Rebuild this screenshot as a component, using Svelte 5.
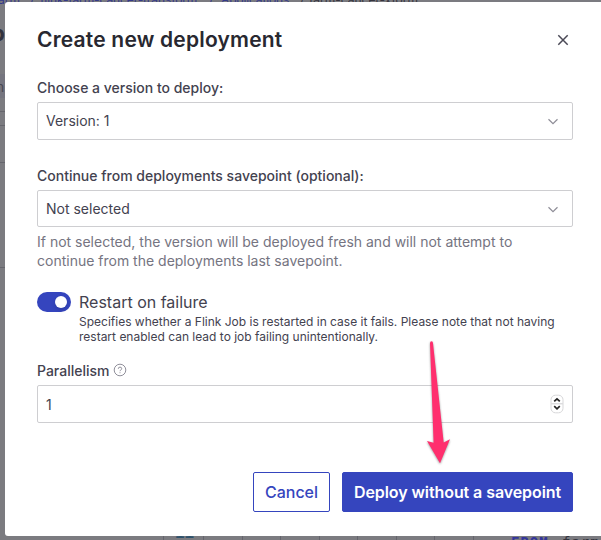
<script>
  let version = $state('Version: 1');
  let savepoint = $state('Not selected');
  let parallelism = $state(1);
  let restart = $state(true);
</script>

<div class="page">
  <div class="behind" aria-hidden="true">
    <span class="link" style="left:-2px">arm</span>
    <span class="link" style="left:30px">/</span>
    <span class="link w1" style="left:40px">flink-farm-cancer-transform</span>
    <span class="link" style="left:209px">/</span>
    <span class="link w2" style="left:221px">Applications</span>
    <span class="link dark" style="left:300px">/</span>
    <span class="link dark" style="left:309px">farm-cancer-xform</span>
    <span class="heading">p</span>
    <span class="panel"></span>
    <span class="col">n</span>
    <span class="rule" style="top:111px"></span>
    <span class="rule" style="top:125px"></span>
    <span class="rule" style="top:162px"></span>
    <span class="rule" style="top:267px"></span>
    <span class="line-no">11</span>
    {#each [163, 203, 242, 280, 319, 357, 396, 434, 473] as x}
      <span class="tick" style="left:{x}px"></span>
    {/each}
    <span class="code kw">FROM</span>
    <span class="code val">farm</span>
  </div>

  <main class="modal">
    <header>
      <h1>Create new deployment</h1>
      <button class="close" aria-label="Close">
        <svg width="12" height="12" viewBox="0 0 12 12"><path d="M1.3 1.3 10.7 10.7M10.7 1.3 1.3 10.7" /></svg>
      </button>
    </header>

    <div class="label l1"><span>Choose a version to deploy:</span></div>
    <div class="field">
      <span>{version}</span>
      <svg class="chev" width="12" height="8" viewBox="0 0 12 8"><path d="M1.5 2.3 6 6.7 10.5 2.3" /></svg>
    </div>

    <div class="label l2"><span>Continue from deployments savepoint (optional):</span></div>
    <div class="field short">
      <span>{savepoint}</span>
      <svg class="chev" width="12" height="8" viewBox="0 0 12 8"><path d="M1.5 2.3 6 6.7 10.5 2.3" /></svg>
    </div>
    <p class="hint">
      If not selected, the version will be deployed fresh and will not attempt to<br />
      continue from the deployments last savepoint.
    </p>

    <div class="toggle-row">
      <button class="switch" class:on={restart} aria-label="Restart on failure"><i></i></button>
      <div class="toggle-text">
        <div class="toggle-title">Restart on failure</div>
        <p>Specifies whether a Flink Job is restarted in case it fails. Please note that not having<br />restart enabled can lead to job failing unintentionally.</p>
      </div>
    </div>

    <div class="label l3">
      <span>Parallelism</span>
      <svg width="14" height="14" viewBox="0 0 14 14">
        <circle cx="7" cy="7" r="5.8" />
        <path d="M5.3 5.8Q5.3 4.1 7 4.1T8.7 5.7Q8.7 6.5 7.8 7 7 7.4 7 8.2M7 9.3V10.2" />
      </svg>
    </div>
    <div class="field number">
      <span>{parallelism}</span>
      <svg class="spin" width="14" height="20" viewBox="0 0 14 20">
        <rect x="1" y="1.2" width="12" height="17.6" rx="4.5" />
        <path class="mid" d="M1 9.7H13" />
        <path class="arrows" d="M4.2 7.4 7 4.8 9.8 7.4M4.2 12.2 7 14.8 9.8 12.2" />
      </svg>
    </div>

    <footer>
      <button class="btn cancel"><span>Cancel</span></button>
      <button class="btn primary"><span>Deploy without a savepoint</span></button>
    </footer>
  </main>

  <svg class="arrow" width="40" height="136" viewBox="0 0 40 136">
    <path d="M10 3.3Q10 1.2 11.5 1.2T13 3.3L23.7 102.5 30 99.3 20 123.3 7 101 13.6 102.8Z" />
  </svg>
</div>

<style>
  .page {
    position: relative;
    box-sizing: border-box;
    width: 601px;
    height: 540px;
    padding: 2px 0 4px 5px;
    overflow: hidden;
    background: #7b7b80;
    font-family: Inter, 'Liberation Sans', sans-serif;
    color: #43424f;
  }
  .behind span { position: absolute; white-space: nowrap; }
  .behind .link {
    top: -8px;
    font: 12px/16px Inter, sans-serif;
    color: #34398a;
  }
  .link.w1 { letter-spacing: -.1px; }
  .link.w2 { letter-spacing: -.15px; }
  .behind .link.dark { color: #35343e; }
  .behind .heading { left: -9px; top: 18px; font: 700 22px/30px Inter, sans-serif; color: #32323d; }
  .behind .panel { left: 0; top: 74px; width: 5px; height: 24px; background: #75757f; }
  .behind .col { left: -4px; top: 78px; font: 14px/18px Inter, sans-serif; color: #484853; }
  .rule { left: 0; width: 5px; height: 1px; background: #66666d; }
  .tick { top: 536px; width: 1px; height: 4px; background: #65656d; }
  .behind .line-no { left: 175px; top: 526px; font: bold 16px/16px 'Liberation Mono', monospace; color: #2f526c; }
  .behind .code { top: 534px; font: bold 14px/16px 'DejaVu Sans Mono', monospace; }
  .kw { left: 511px; color: #34359b; letter-spacing: 1px; }
  .behind .val { left: 562px; color: #34343e; font-weight: 400; letter-spacing: 1px; }

  .modal {
    position: relative;
    box-sizing: border-box;
    height: 534px;
    padding: 0 28px 0 32px;
    background: #fff;
    border-radius: 3px 0 0 3px;
  }
  header { display: flex; align-items: center; justify-content: space-between; height: 73px; }
  h1 {
    margin: 2px 0 0;
    font-size: 21px;
    line-height: 30px;
    font-weight: 600;
    letter-spacing: .2px;
    color: #282830;
    white-space: nowrap;
  }
  button { padding: 0; border: 0; background: none; font-family: inherit; }
  .close { display: flex; margin-right: 4px; margin-top: 3px; }
  .close path { fill: none; stroke: #4a4956; stroke-width: 1.5; }
  .label { display: flex; align-items: center; font-size: 14px; font-weight: 500; white-space: nowrap; }
  .label.l1 { height: 25px; margin-bottom: 2px; }
  .label.l2 { margin-top: 22px; height: 26px; margin-bottom: 2px; }
  .label.l3 { margin-top: 9px; height: 28px; margin-bottom: 1px; }
  .label svg { margin-left: 4px; }
  .label svg circle, .label svg path { fill: none; stroke: #908f9a; stroke-width: 1; }
  .field {
    display: flex;
    align-items: center;
    justify-content: space-between;
    box-sizing: border-box;
    height: 38px;
    padding: 0 13px 1px 8px;
    border: 1px solid #ceced1;
    border-radius: 2px;
    font-size: 14px;
  }
  .field.short { height: 37px; padding-bottom: 0; }
  .field.number { padding-right: 8px; padding-bottom: 0; }
  .chev path { fill: none; stroke: #8e8d97; stroke-width: 1.2; }
  .spin rect { fill: #fff; stroke: #d7d7d9; }
  .spin .mid { stroke: #dcdcde; fill: none; stroke-width: 1.5; }
  .spin .arrows { fill: none; stroke: #222; stroke-width: 1.7; }
  .hint { margin: 5px 0 0; height: 39px; font-size: 14px; line-height: 19px; color: #757481; white-space: nowrap; }
  .toggle-row { display: flex; gap: 8px; margin-top: 20px; height: 56px; }
  .switch { display: flex; align-items: center; box-sizing: border-box; width: 34px; height: 20px; margin-top: 1px; padding: 0 4px; border-radius: 10px; background: #aaa; }
  .switch.on { justify-content: flex-end; background: #3545be; }
  .switch i { width: 12px; height: 12px; border-radius: 50%; background: #fff; box-shadow: 0 2px 4px #0002; }
  .toggle-title { height: 23px; font-size: 16px; line-height: 22px; white-space: nowrap; }
  .toggle-text p { margin: 0; font-size: 12px; line-height: 15px; white-space: nowrap; }
  footer { display: flex; justify-content: flex-end; gap: 12px; margin-top: 49px; }
  .btn { box-sizing: border-box; height: 40px; border: 1px solid #3545be; border-radius: 2px; font-size: 16px; font-weight: 500; line-height: 24px; white-space: nowrap; }
  .cancel { width: 77px; color: #3545be; background: #fff; }
  .primary { width: 231px; color: #fff; background: #3545be; font-weight: 600; letter-spacing: -.08px; }
  .arrow { position: absolute; left: 420px; top: 340px; filter: drop-shadow(0 1px 1px #0006); pointer-events: none; }
  .arrow path { fill: #ff2f6e; }
</style>
